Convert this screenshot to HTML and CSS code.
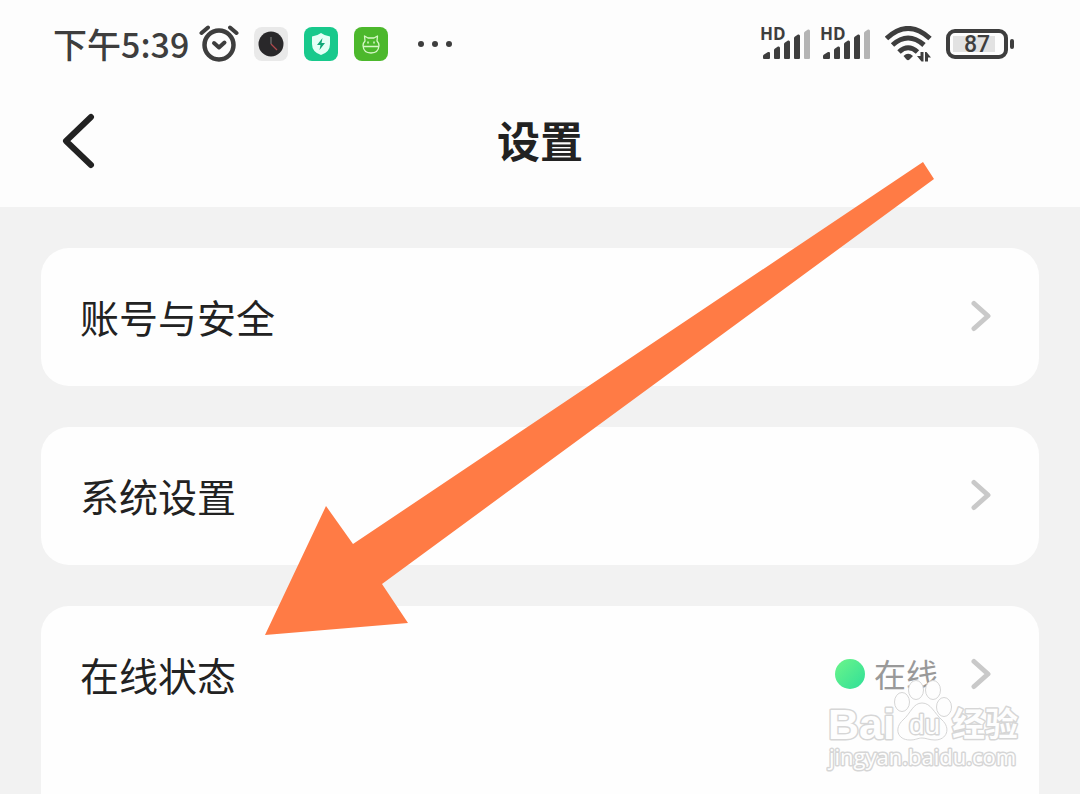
FILE: index.html
```html
<!DOCTYPE html>
<html lang="zh-CN">
<head>
    <meta charset="UTF-8">
    <meta name="viewport" content="width=device-width, initial-scale=1.0">
    <title>设置</title>
    <link rel="stylesheet" href="styles.css">
</head>
<body>

    <header class="header">
        <!-- Status bar -->
        <div class="status-bar">
            <div class="status-left">
                <span class="time">下午5:39</span>
                <svg class="alarm" width="40" height="38" viewBox="0 0 40 38" fill="none" stroke="#3e3e3e" stroke-linecap="round">
                    <circle cx="20" cy="20" r="14.500" stroke-width="4.500"/>
                    <path d="M2.500 8 L9 2.500 M31 2.500 L37.500 8" stroke-width="4"/>
                    <path d="M15 18 L20 22.500 L25.500 17.500" stroke-width="4" stroke-linejoin="round"/>
                </svg>
                <div class="apps">
                    <svg width="34" height="34" viewBox="0 0 34 34">
                        <rect width="34" height="34" rx="8" fill="#e9e9e9"/>
                        <circle cx="17" cy="17" r="12.500" fill="#29282a"/>
                        <path d="M17 10 V17" stroke="#666" stroke-width="1.500"/>
                        <path d="M17 17 L23 23" stroke="#b0474c" stroke-width="1.300"/>
                    </svg>
                    <svg width="34" height="34" viewBox="0 0 34 34">
                        <rect width="34" height="34" rx="8" fill="#18c98c"/>
                        <path d="M17 6 Q21 9 26 9.500 V17 Q26 25 17 28 Q8 25 8 17 V9.500 Q13 9 17 6Z" fill="#e6fff6"/>
                        <path d="M18.500 11 L13 18 H16.500 L15.500 23 L21 16 H17.500Z" fill="#12a878"/>
                    </svg>
                    <svg width="34" height="34" viewBox="0 0 34 34" fill="none">
                        <rect width="34" height="34" rx="8" fill="#4cb82c"/>
                        <path d="M11 14 L10.500 9 L14 11 H20 L23.500 9 L23 14 Q25 16 25 18.500 Q24.500 26 17 26 Q9.500 26 9 18.500 Q9 16 11 14Z M9 19.500 H25" stroke="#d6f7c6" stroke-width="1.300" stroke-linejoin="round"/>
                        <path d="M14 14.500 V16.500 M20 14.500 V16.500" stroke="#d6f7c6" stroke-width="1.500"/>
                    </svg>
                </div>
                <svg width="36" height="8" viewBox="0 0 36 8" fill="#3e3e3e">
                    <circle cx="4" cy="4" r="3"/>
                    <circle cx="18" cy="4" r="3"/>
                    <circle cx="32" cy="4" r="3"/>
                </svg>
            </div>
            <div class="status-right">
                <div class="signal">
                    <span class="hd">HD</span>
                    <svg width="48" height="32" viewBox="0 0 48 32" fill="#3e3e3e">
                        <path d="M0 28 Q0 27 1 26.500 L5 24 Q7 23.500 7 25 V30 Q7 31 6 31 H1 Q0 31 0 30Z"/>
                        <path d="M11 22 Q11 21 12 20.500 L15 18.500 Q17 18 17 20 V30 Q17 31 16 31 H12 Q11 31 11 30Z"/>
                        <path d="M21 16 Q21 15 22 14.500 L25 12.500 Q27 12 27 14 V30 Q27 31 26 31 H22 Q21 31 21 30Z"/>
                        <path d="M31 10 Q31 9 32 8.500 L35 6.500 Q37 6 37 8 V30 Q37 31 36 31 H32 Q31 31 31 30Z"/>
                        <path d="M41 5 Q41 4 42 3.500 L45 1.500 Q47 1 47 3 V30 Q47 31 46 31 H42 Q41 31 41 30Z" fill="#b4b4b4"/>
                    </svg>
                </div>
                <div class="signal">
                    <span class="hd">HD</span>
                    <svg width="48" height="32" viewBox="0 0 48 32" fill="#3e3e3e">
                        <path d="M0 28 Q0 27 1 26.500 L5 24 Q7 23.500 7 25 V30 Q7 31 6 31 H1 Q0 31 0 30Z"/>
                        <path d="M11 22 Q11 21 12 20.500 L15 18.500 Q17 18 17 20 V30 Q17 31 16 31 H12 Q11 31 11 30Z"/>
                        <path d="M21 16 Q21 15 22 14.500 L25 12.500 Q27 12 27 14 V30 Q27 31 26 31 H22 Q21 31 21 30Z"/>
                        <path d="M31 10 Q31 9 32 8.500 L35 6.500 Q37 6 37 8 V30 Q37 31 36 31 H32 Q31 31 31 30Z"/>
                        <path d="M41 5 Q41 4 42 3.500 L45 1.500 Q47 1 47 3 V30 Q47 31 46 31 H42 Q41 31 41 30Z" fill="#b4b4b4"/>
                    </svg>
                </div>
                <svg class="wifi" width="47" height="36" viewBox="0 0 47 36" fill="none" stroke="#3e3e3e" stroke-width="5">
                    <path d="M1.500 12.500 Q23 -7.500 45 12.500"/>
                    <path d="M7.500 19 Q23 5 39 19"/>
                    <path d="M14 26 Q23 17.500 32.500 26"/>
                    <path d="M18.500 30 Q23 25.500 28 30 L24.500 33.500 Q23 35 21.500 33.500Z" fill="#3e3e3e" stroke="none"/>
                    <path d="M38.500 26 V35.500 H36.500 L32 30 H35.500 V26Z M40 35.500 V26 H41.500 L46 31.500 H43 V35.500Z" fill="#3e3e3e" stroke="none"/>
                </svg>
                <div class="battery"><span class="level">87</span></div>
            </div>
        </div>

        <!-- Title bar -->
        <div class="title-bar">
            <button class="back" aria-label="返回">
                <svg width="34" height="56" viewBox="0 0 34 56" fill="none" stroke="#222" stroke-width="6" stroke-linecap="round" stroke-linejoin="round">
                    <path d="M30 4 L5 28 L30 52"/>
                </svg>
            </button>
            <h1>设置</h1>
        </div>
    </header>

    <main class="list">
        <a class="card" href="#">
            <span class="row">
                <span class="label">账号与安全</span>
                <svg class="chevron" width="22" height="32" viewBox="0 0 22 32"><path d="M4 3.500 L18 16 L4 28.500"/></svg>
            </span>
        </a>
        <a class="card" href="#">
            <span class="row">
                <span class="label">系统设置</span>
                <svg class="chevron" width="22" height="32" viewBox="0 0 22 32"><path d="M4 3.500 L18 16 L4 28.500"/></svg>
            </span>
        </a>
        <a class="card card-last" href="#">
            <span class="row">
                <span class="label">在线状态</span>
                <span class="dot"></span>
                <span class="value">在线</span>
                <svg class="chevron" width="22" height="32" viewBox="0 0 22 32"><path d="M4 3.500 L18 16 L4 28.500"/></svg>
            </span>
        </a>
    </main>

    <!-- Arrow pointing at the online status row -->
    <svg class="arrow" width="670" height="474" viewBox="265 162 670 474">
        <polygon points="923,162 934,179 382,584 408,623 265,635 326,506 353,544" fill="#ff7b45"/>
    </svg>

    <!-- Watermark -->
    <svg class="watermark" width="200" height="98" viewBox="0 0 200 98">
        <text class="mark-big" x="2" y="60">Bai</text>
        <g>
            <ellipse cx="76" cy="23" rx="7.500" ry="9.500"/>
            <ellipse cx="90" cy="11" rx="7.500" ry="9.500"/>
            <ellipse cx="107" cy="11" rx="7.500" ry="9.500"/>
            <ellipse cx="118" cy="28" rx="7.500" ry="9.500"/>
            <path d="M96 24 C105 24 108 34 116 41 C125 49 121 61 109 61 C103 61 100 59 96 59 C92 59 90 61 84 61 C71 61 68 49 77 41 C85 34 87 24 96 24Z"/>
        </g>
        <text class="mark-du" x="83" y="55">du</text>
        <text class="mark-cjk" x="126" y="57">经验</text>
        <text class="mark-url" x="3" y="86">jingyan.baidu.com</text>
    </svg>

</body>
</html>
```
FILE: styles.css
```css
* {
    box-sizing: border-box;
}

body {
    position: relative;
    display: flex;
    flex-direction: column;
    min-height: 100vh;
    margin: 0;
    background-color: #f2f2f2;
    color: #222;
    font-family: "Noto Sans CJK SC", sans-serif;
}

svg {
    display: block;
    flex: none;
}

.header {
    background-color: #fdfdfd;
}

.status-bar {
    display: flex;
    justify-content: space-between;
    align-items: center;
    height: 88px;
    padding: 0 72px 0 53px;
    color: #3e3e3e;
}

.status-left,
.status-right,
.apps {
    display: flex;
    align-items: center;
}

.time {
    font-size: 34px;
    line-height: 40px;
    font-weight: 500;
}

.alarm {
    margin: 0 15px 0 10px;
}

.apps {
    gap: 16px;
    margin-right: 29px;
}

.signal {
    position: relative;
    padding-left: 2px;
    margin-right: 10px;
}

.hd {
    position: absolute;
    left: -1px;
    top: -4px;
    font-family: "Open Sans", sans-serif;
    font-size: 17px;
    line-height: 20px;
    font-weight: 700;
}

.wifi {
    margin: 0 14px 0 4px;
}

.battery {
    position: relative;
    width: 62px;
    height: 30px;
    padding: 3px;
    border: 4px solid #3e3e3e;
    border-radius: 9px;
}

.battery::after {
    content: "";
    position: absolute;
    right: -10px;
    top: 6px;
    width: 4px;
    height: 10px;
    border-radius: 2px;
    background-color: #3e3e3e;
}

.level {
    display: block;
    width: 42px;
    height: 16px;
    padding-left: 6px;
    background-color: #e2e2e2;
    font-family: Roboto, sans-serif;
    font-size: 23px;
    line-height: 18px;
    font-weight: 500;
    text-align: center;
}

.title-bar {
    display: grid;
    grid-template-columns: 1fr auto 1fr;
    align-items: center;
    height: 119px;
    padding: 0 61px 14px;
}

.back {
    justify-self: start;
    padding: 0;
    border: none;
    background: none;
    cursor: pointer;
}

h1 {
    margin: 0;
    padding-bottom: 4px;
    font-size: 43px;
    line-height: 60px;
    font-weight: 700;
}

.list {
    flex: 1;
    display: flex;
    flex-direction: column;
    gap: 41px;
    padding: 41px 41px 0;
}

.card {
    border-radius: 28px;
    background-color: #fefefe;
    color: #222;
    text-decoration: none;
}

.card-last {
    flex: 1;
    border-radius: 28px 28px 0 0;
}

.row {
    display: flex;
    align-items: center;
    height: 138px;
    padding: 0 47px 2px 39px;
}

.label {
    flex: 1;
    font-size: 39px;
    line-height: 56px;
}

.dot {
    width: 30px;
    height: 30px;
    margin-right: 9px;
    border-radius: 50%;
    background: linear-gradient(135deg, #6df58a, #2fdf98);
}

.value {
    margin-right: 32px;
    padding-bottom: 2px;
    color: #999;
    font-size: 32px;
    line-height: 48px;
}

.chevron {
    fill: none;
    stroke: #c9c9c9;
    stroke-width: 5;
    stroke-linecap: round;
    stroke-linejoin: round;
}

.arrow {
    position: absolute;
    left: 265px;
    top: 162px;
    pointer-events: none;
}

.watermark {
    position: absolute;
    right: 54px;
    top: 679px;
    pointer-events: none;
    fill: #fefefe;
    stroke: #d6d6d6;
    stroke-width: 1;
}

.watermark text {
    paint-order: stroke;
    stroke-width: 3;
    stroke-linejoin: round;
}

.mark-big {
    font-family: "Liberation Sans", sans-serif;
    font-size: 43px;
    font-weight: 700;
}

.mark-du {
    font-family: "Liberation Sans", sans-serif;
    font-size: 28px;
}

.mark-cjk {
    font-size: 33px;
    font-weight: 700;
}

.mark-url {
    font-family: "Open Sans", sans-serif;
    font-size: 22px;
}
```
